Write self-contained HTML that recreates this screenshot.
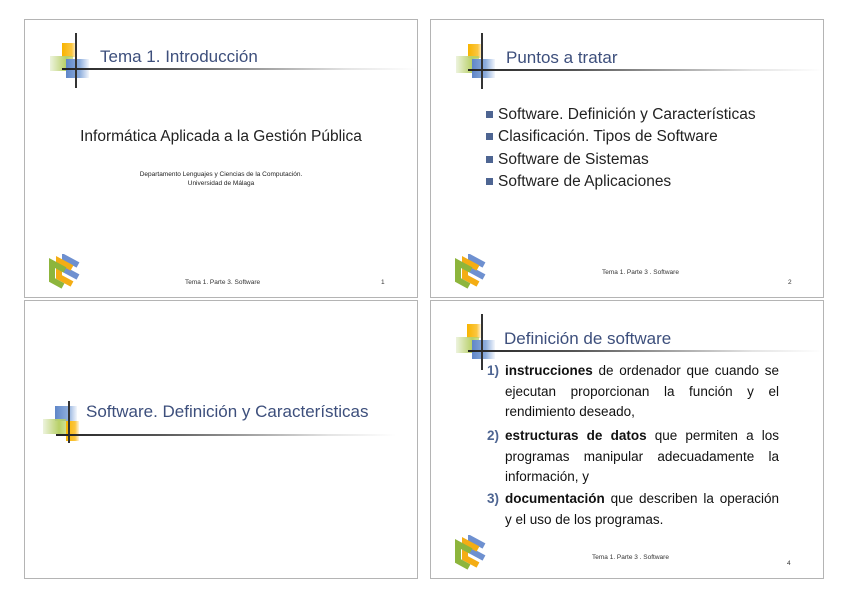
<!DOCTYPE html>
<html><head><meta charset="utf-8"><style>
body{margin:0;width:848px;height:599px;background:#fff;position:relative;overflow:hidden;font-family:"Liberation Sans","DejaVu Sans",sans-serif;}
.s{position:absolute;width:392px;height:277px;border:1px solid #b4b4b4;background:#fff;overflow:hidden}
.a{position:absolute}
.or{background:linear-gradient(90deg,#f8b400,#fbc640 70%,rgba(255,220,140,0.3));}
.bl{background:linear-gradient(90deg,#5f86c8,#8eaedd 60%,rgba(200,215,240,0.2));}
.gr{background:linear-gradient(90deg,rgba(225,235,200,0.6),#b8d068 70%,rgba(185,210,100,0.7));}
.vl{width:2px;background:#333}
.hl{height:2px;background:linear-gradient(90deg,#222,#555 30%,rgba(200,200,200,0.5) 80%,rgba(255,255,255,0))}
.t{color:#3d4f7c;font-size:17px;white-space:nowrap}
.f{font-size:6.5px;color:#333;white-space:nowrap}
.b{font-size:15.5px;color:#222;white-space:nowrap;line-height:22.3px}
.b i{display:inline-block;width:7px;height:7px;background:#4e6592;margin-right:5px;vertical-align:1px}
.l{position:absolute;left:55px;width:293px;font-size:13.5px;color:#111;line-height:20.5px;text-align:justify;text-align-last:left}
.l .n{position:absolute;left:-18px;color:#4e6592;font-weight:bold}
</style></head><body>

<div class="s" style="left:24px;top:19px">
 <div class="a or" style="left:37px;top:23px;width:14px;height:14px"></div>
 <div class="a gr" style="left:25px;top:36px;width:23px;height:15px"></div>
 <div class="a bl" style="left:41px;top:39px;width:23px;height:19px"></div>
 <div class="a vl" style="left:50px;top:13px;height:55px"></div>
 <div class="a hl" style="left:37px;top:48px;width:355px"></div>
 <div class="a t" style="left:75px;top:27px">Tema 1. Introducción</div>
 <div class="a" style="left:0;width:392px;top:108px;text-align:center;font-size:15.5px;color:#222">Informática Aplicada a la Gestión Pública</div>
 <div class="a" style="left:0;width:392px;top:150px;text-align:center;font-size:6.5px;color:#222;line-height:9px">Departamento Lenguajes y Ciencias de la Computación.<br>Universidad de Málaga</div>
 <svg class="a" style="left:22px;top:234px" width="34" height="35" viewBox="0 0 34 35"><g stroke-linecap="butt" stroke-linejoin="miter" fill="none" stroke-width="6"><polyline points="31,11 18,4 18,16 31,23" stroke="#6e90d0"/><polyline points="25,14 12,7 12,23 25,30" stroke="#f4ad14"/><polyline points="18,16 5,9 5,26 16,32" stroke="#8db53c"/></g></svg>
 <div class="a f" style="left:160px;top:259px">Tema 1. Parte 3. Software</div>
 <div class="a f" style="left:356px;top:259px">1</div>
</div>

<div class="s" style="left:430px;top:19px">
 <div class="a or" style="left:37px;top:24px;width:14px;height:14px"></div>
 <div class="a gr" style="left:25px;top:36px;width:23px;height:17px"></div>
 <div class="a bl" style="left:41px;top:39px;width:23px;height:19px"></div>
 <div class="a vl" style="left:50px;top:13px;height:56px"></div>
 <div class="a hl" style="left:37px;top:49px;width:355px"></div>
 <div class="a t" style="left:75px;top:28px">Puntos a tratar</div>
 <div class="a b" style="left:55px;top:84px"><i></i>Software. Definición y Características<br><i></i>Clasificación. Tipos de Software<br><i></i>Software de Sistemas<br><i></i>Software de Aplicaciones</div>
 <svg class="a" style="left:22px;top:234px" width="34" height="35" viewBox="0 0 34 35"><g stroke-linecap="butt" stroke-linejoin="miter" fill="none" stroke-width="6"><polyline points="31,11 18,4 18,16 31,23" stroke="#6e90d0"/><polyline points="25,14 12,7 12,23 25,30" stroke="#f4ad14"/><polyline points="18,16 5,9 5,26 16,32" stroke="#8db53c"/></g></svg>
 <div class="a f" style="left:171px;top:249px">Tema 1. Parte 3 . Software</div>
 <div class="a f" style="left:357px;top:259px">2</div>
</div>

<div class="s" style="left:24px;top:300px">
 <div class="a bl" style="left:30px;top:105px;width:22px;height:15px"></div>
 <div class="a gr" style="left:18px;top:118px;width:23px;height:15px"></div>
 <div class="a or" style="left:41px;top:120px;width:13px;height:20px"></div>
 <div class="a vl" style="left:43px;top:100px;height:42px"></div>
 <div class="a hl" style="left:31px;top:133px;width:340px"></div>
 <div class="a t" style="left:61px;top:101px">Software. Definición y Características</div>
</div>

<div class="s" style="left:430px;top:300px">
 <div class="a or" style="left:36px;top:23px;width:14px;height:14px"></div>
 <div class="a gr" style="left:25px;top:36px;width:23px;height:16px"></div>
 <div class="a bl" style="left:41px;top:39px;width:23px;height:19px"></div>
 <div class="a vl" style="left:50px;top:13px;height:56px"></div>
 <div class="a hl" style="left:37px;top:49px;width:355px"></div>
 <div class="a t" style="left:73px;top:28px">Definición de software</div>
 <div class="l" style="left:74px;top:60px;width:274px"><span class="n">1)</span><b>instrucciones</b> de ordenador que cuando se ejecutan proporcionan la función y el rendimiento deseado,</div>
 <div class="l" style="left:74px;top:125px;width:274px"><span class="n">2)</span><b>estructuras de datos</b> que permiten a los programas manipular adecuadamente la información, y</div>
 <div class="l" style="left:74px;top:188px;width:274px"><span class="n">3)</span><b>documentación</b> que describen la operación y el uso de los programas.</div>
 <svg class="a" style="left:22px;top:234px" width="34" height="35" viewBox="0 0 34 35"><g stroke-linecap="butt" stroke-linejoin="miter" fill="none" stroke-width="6"><polyline points="31,11 18,4 18,16 31,23" stroke="#6e90d0"/><polyline points="25,14 12,7 12,23 25,30" stroke="#f4ad14"/><polyline points="18,16 5,9 5,26 16,32" stroke="#8db53c"/></g></svg>
 <div class="a f" style="left:161px;top:253px">Tema 1. Parte 3 . Software</div>
 <div class="a f" style="left:356px;top:259px">4</div>
</div>
</body></html>
